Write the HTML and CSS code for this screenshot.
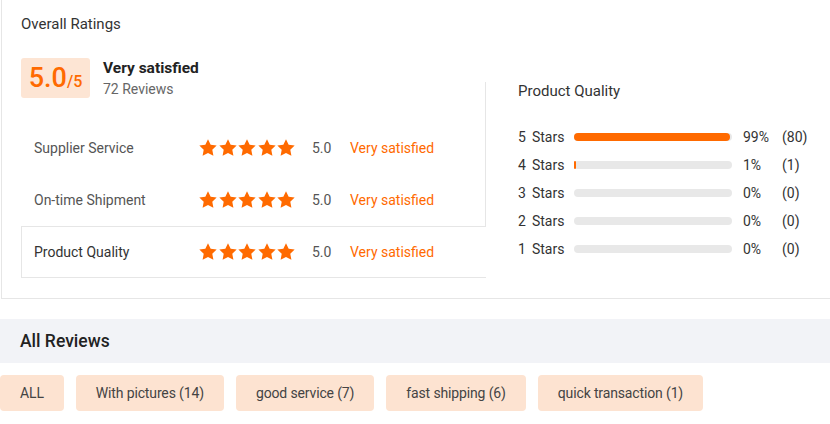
FILE: index.html
```html
<!DOCTYPE html>
<html>
<head>
<meta charset="utf-8">
<link rel="stylesheet" href="styles.css">
</head>
<body>
<div class="card">
  <div class="card-title">Overall Ratings</div>
  <div class="overview">
    <div class="left-col">
      <div class="score-head">
        <div class="score-box"><span class="score-big">5.0</span><span class="score-small">/5</span></div>
        <div class="score-text">
          <div class="score-label">Very satisfied</div>
          <div class="score-count">72 Reviews</div>
        </div>
      </div>
      <div class="tabs-plain">
        <div class="tab">
          <span class="tab-name">Supplier Service</span>
          <span class="stars">
            <svg viewBox="1.5 1.5 21 21"><path d="M12 1.8l3.1 6.5 7 .9-5.1 4.9 1.3 7-6.3-3.4-6.3 3.4 1.3-7-5.1-4.9 7-.9z"/></svg>
            <svg viewBox="1.5 1.5 21 21"><path d="M12 1.8l3.1 6.5 7 .9-5.1 4.9 1.3 7-6.3-3.4-6.3 3.4 1.3-7-5.1-4.9 7-.9z"/></svg>
            <svg viewBox="1.5 1.5 21 21"><path d="M12 1.8l3.1 6.5 7 .9-5.1 4.9 1.3 7-6.3-3.4-6.3 3.4 1.3-7-5.1-4.9 7-.9z"/></svg>
            <svg viewBox="1.5 1.5 21 21"><path d="M12 1.8l3.1 6.5 7 .9-5.1 4.9 1.3 7-6.3-3.4-6.3 3.4 1.3-7-5.1-4.9 7-.9z"/></svg>
            <svg viewBox="1.5 1.5 21 21"><path d="M12 1.8l3.1 6.5 7 .9-5.1 4.9 1.3 7-6.3-3.4-6.3 3.4 1.3-7-5.1-4.9 7-.9z"/></svg>
          </span>
          <span class="tab-score">5.0</span>
          <span class="tab-desc">Very satisfied</span>
        </div>
        <div class="tab">
          <span class="tab-name">On-time Shipment</span>
          <span class="stars">
            <svg viewBox="1.5 1.5 21 21"><path d="M12 1.8l3.1 6.5 7 .9-5.1 4.9 1.3 7-6.3-3.4-6.3 3.4 1.3-7-5.1-4.9 7-.9z"/></svg>
            <svg viewBox="1.5 1.5 21 21"><path d="M12 1.8l3.1 6.5 7 .9-5.1 4.9 1.3 7-6.3-3.4-6.3 3.4 1.3-7-5.1-4.9 7-.9z"/></svg>
            <svg viewBox="1.5 1.5 21 21"><path d="M12 1.8l3.1 6.5 7 .9-5.1 4.9 1.3 7-6.3-3.4-6.3 3.4 1.3-7-5.1-4.9 7-.9z"/></svg>
            <svg viewBox="1.5 1.5 21 21"><path d="M12 1.8l3.1 6.5 7 .9-5.1 4.9 1.3 7-6.3-3.4-6.3 3.4 1.3-7-5.1-4.9 7-.9z"/></svg>
            <svg viewBox="1.5 1.5 21 21"><path d="M12 1.8l3.1 6.5 7 .9-5.1 4.9 1.3 7-6.3-3.4-6.3 3.4 1.3-7-5.1-4.9 7-.9z"/></svg>
          </span>
          <span class="tab-score">5.0</span>
          <span class="tab-desc">Very satisfied</span>
        </div>
      </div>
      <div class="tab tab-active">
        <span class="tab-name tab-name-active">Product Quality</span>
        <span class="stars">
          <svg viewBox="1.5 1.5 21 21"><path d="M12 1.8l3.1 6.5 7 .9-5.1 4.9 1.3 7-6.3-3.4-6.3 3.4 1.3-7-5.1-4.9 7-.9z"/></svg>
          <svg viewBox="1.5 1.5 21 21"><path d="M12 1.8l3.1 6.5 7 .9-5.1 4.9 1.3 7-6.3-3.4-6.3 3.4 1.3-7-5.1-4.9 7-.9z"/></svg>
          <svg viewBox="1.5 1.5 21 21"><path d="M12 1.8l3.1 6.5 7 .9-5.1 4.9 1.3 7-6.3-3.4-6.3 3.4 1.3-7-5.1-4.9 7-.9z"/></svg>
          <svg viewBox="1.5 1.5 21 21"><path d="M12 1.8l3.1 6.5 7 .9-5.1 4.9 1.3 7-6.3-3.4-6.3 3.4 1.3-7-5.1-4.9 7-.9z"/></svg>
          <svg viewBox="1.5 1.5 21 21"><path d="M12 1.8l3.1 6.5 7 .9-5.1 4.9 1.3 7-6.3-3.4-6.3 3.4 1.3-7-5.1-4.9 7-.9z"/></svg>
        </span>
        <span class="tab-score">5.0</span>
        <span class="tab-desc">Very satisfied</span>
      </div>
    </div>
    <div class="right-col">
      <div class="dist-title">Product Quality</div>
      <div class="dist-row">
        <span class="dist-label"><span class="dist-num">5</span>Stars</span>
        <span class="bar"><span class="bar-fill" style="width:99%"></span></span>
        <span class="dist-pct">99%</span>
        <span class="dist-count">(80)</span>
      </div>
      <div class="dist-row">
        <span class="dist-label"><span class="dist-num">4</span>Stars</span>
        <span class="bar"><span class="bar-fill" style="width:1%"></span></span>
        <span class="dist-pct">1%</span>
        <span class="dist-count">(1)</span>
      </div>
      <div class="dist-row">
        <span class="dist-label"><span class="dist-num">3</span>Stars</span>
        <span class="bar"></span>
        <span class="dist-pct">0%</span>
        <span class="dist-count">(0)</span>
      </div>
      <div class="dist-row">
        <span class="dist-label"><span class="dist-num">2</span>Stars</span>
        <span class="bar"></span>
        <span class="dist-pct">0%</span>
        <span class="dist-count">(0)</span>
      </div>
      <div class="dist-row">
        <span class="dist-label"><span class="dist-num">1</span>Stars</span>
        <span class="bar"></span>
        <span class="dist-pct">0%</span>
        <span class="dist-count">(0)</span>
      </div>
    </div>
  </div>
</div>
<div class="reviews-head">All Reviews</div>
<div class="chips">
  <span class="chip">ALL</span>
  <span class="chip">With pictures (14)</span>
  <span class="chip">good service (7)</span>
  <span class="chip">fast shipping (6)</span>
  <span class="chip">quick transaction (1)</span>
</div>
</body>
</html>
```

FILE: styles.css
```css
* { box-sizing: border-box; }
body {
  margin: 0;
  background: #fff;
  font-family: Roboto, "Liberation Sans", sans-serif;
  color: #333;
  width: 830px;
  height: 424px;
  overflow: hidden;
}
.card {
  margin-left: 1px;
  border-left: 1px solid #e6e6e6;
  border-bottom: 1px solid #e6e6e6;
  padding: 14px 0 20px 19px;
}
.card-title {
  font-size: 15px;
  line-height: 20px;
  color: #333;
}
.overview {
  display: flex;
  margin-top: 24px;
}
.left-col {
  width: 465px;
  display: flex;
  flex-direction: column;
}
.score-head {
  display: flex;
  align-items: center;
  height: 40px;
  margin-bottom: -16px;
  position: relative;
  z-index: 1;
}
.score-box {
  width: 69px;
  height: 40px;
  background: #fde5d4;
  border-radius: 3px;
  display: flex;
  align-items: baseline;
  justify-content: center;
  padding-top: 3px;
  color: #ff6a00;
  font-weight: 500;
}
.score-big {
  font-size: 27px;
  line-height: 34px;
}
.score-small {
  font-size: 16px;
  line-height: 34px;
}
.score-text {
  margin-left: 13px;
  padding-top: 2px;
}
.score-label {
  font-size: 15.5px;
  font-weight: 700;
  line-height: 20px;
  color: #222;
  margin-top: -2px;
}
.score-count {
  font-size: 14px;
  line-height: 20px;
  color: #666;
  margin-top: 1px;
}
.tabs-plain {
  border-right: 1px solid #e6e6e6;
  padding-top: 40px;
}
.tab {
  height: 52px;
  display: flex;
  align-items: center;
  padding-left: 12px;
  border: 1px solid transparent;
  border-right: none;
  font-size: 14px;
}
.tab-active {
  border-color: #e6e6e6;
}
.tab-name {
  width: 165px;
  color: #555;
}
.tab-name-active {
  color: #333;
}
.stars {
  display: flex;
  gap: 1.5px;
  width: 113px;
}
.stars svg {
  width: 18px;
  height: 18px;
  fill: #ff6a00;
}
.tab-score {
  width: 38px;
  color: #555;
}
.tab-desc {
  color: #ff6a00;
}
.right-col {
  flex: 1;
  padding: 23px 0 0 32px;
}
.dist-title {
  font-size: 15px;
  line-height: 20px;
  color: #333;
  margin-bottom: 22px;
}
.dist-row {
  display: flex;
  align-items: center;
  height: 28px;
  font-size: 14px;
  color: #333;
}
.dist-label {
  width: 56px;
}
.dist-num {
  margin-right: 6px;
}
.bar {
  width: 158px;
  height: 8px;
  border-radius: 4px;
  background: #e8e8e8;
  display: flex;
}
.bar-fill {
  height: 100%;
  min-width: 2px;
  background: #ff6a00;
  border-radius: 4px;
}
.dist-pct {
  margin-left: 11px;
  width: 39px;
}
.dist-count {
  color: #333;
}
.reviews-head {
  margin-top: 20px;
  height: 44px;
  background: #f2f3f7;
  padding-left: 20px;
  font-size: 17.5px;
  font-weight: 500;
  line-height: 44px;
  color: #222;
}
.chips {
  display: flex;
  gap: 12px;
  margin-top: 12px;
}
.chip {
  height: 36px;
  line-height: 36px;
  padding: 0 20px;
  background: #fde3d1;
  border-radius: 4px;
  font-size: 14px;
  letter-spacing: -0.14px;
  color: #444;
}
```
